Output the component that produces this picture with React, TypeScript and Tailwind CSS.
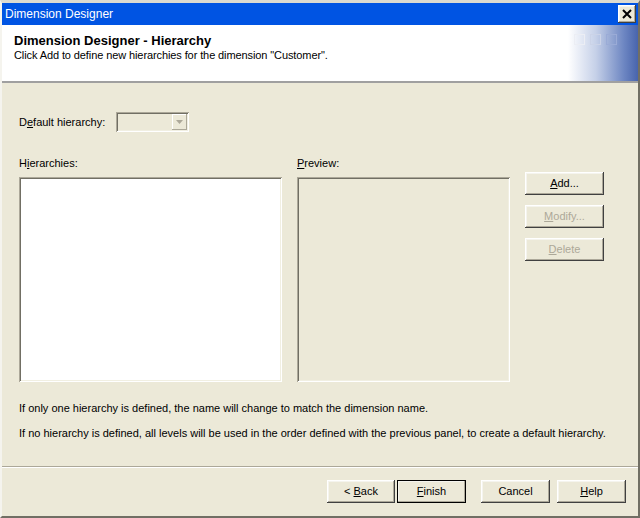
const raised =
  'shadow-[inset_-1px_-1px_#404040,inset_1px_1px_#ffffff,inset_-2px_-2px_#aca899,inset_2px_2px_#f5f4ee]';
const sunken =
  'shadow-[inset_1px_1px_#aca899,inset_-1px_-1px_#ffffff,inset_2px_2px_#716f64,inset_-2px_-2px_#f1efe2]';

function Btn({
  children,
  disabled,
  isDefault,
  className = '',
}: {
  children: React.ReactNode;
  disabled?: boolean;
  isDefault?: boolean;
  className?: string;
}) {
  return (
    <button
      type="button"
      className={`flex h-[23px] items-center justify-center bg-[#ece9d8] text-[11px] ${raised} ${
        isDefault ? 'outline outline-1 outline-[#000000] -outline-offset-1' : ''
      } ${disabled ? 'text-[#aca899]' : 'text-black'} ${className}`}
    >
      {children}
    </button>
  );
}

export default function App() {
  return (
    <div
      className="flex h-[518px] w-[640px] flex-col overflow-hidden border-x-2 border-b-2 border-t-[3px] border-b-[#716f64] border-l-[#f5f4ee] border-r-[#716f64] border-t-[#dcdad0] bg-[#ece9d8] text-[11px] text-black"
      style={{ fontFamily: '"Liberation Sans", Arial, sans-serif' }}
    >
      {/* title bar */}
      <div className="flex h-[22px] shrink-0 items-center justify-between bg-[#0054e3] pl-[3px] pr-[2px]">
        <span className="text-[12px] text-white">Dimension Designer</span>
        <div className={`flex h-[18px] w-[18px] items-center justify-center bg-[#ece9d8] ${raised}`}>
          <svg width="10" height="10" viewBox="0 0 10 10">
            <path d="M1 1 L9 9 M9 1 L1 9" stroke="#000" strokeWidth="2" />
          </svg>
        </div>
      </div>

      {/* header */}
      <div className="relative flex h-[58px] shrink-0 flex-col border-b-2 border-b-[#a0a0a0] bg-white pl-[12px] pt-[8px]">
        <div className="text-[13px] font-bold leading-[16px]">Dimension Designer - Hierarchy</div>
        <div className="leading-[13px] tracking-[-0.1px]">
          Click Add to define new hierarchies for the dimension "Customer".
        </div>
        <div className="absolute right-0 top-0 h-full w-[70px] bg-[linear-gradient(to_right,#ffffff,#c5d0e8_40%,#6d86c2_80%,#4864ac)]">
          <div className="absolute left-[6px] top-[9px] flex gap-[5px]">
            <div className="h-[11px] w-[11px] border border-[#eceef4]" />
            <div className="h-[11px] w-[11px] border border-[#cbd3e7]" />
            <div className="h-[11px] w-[11px] border border-[#9aabd6]" />
          </div>
        </div>
      </div>

      {/* body */}
      <div className="flex flex-1 flex-col px-[17px]">
        <div className="mt-[29px] flex items-center">
          <span className="w-[97px]">
            D<span className="underline">e</span>fault hierarchy:
          </span>
          <div className={`flex h-[20px] w-[73px] items-center justify-end bg-[#ece9d8] pr-[2px] ${sunken}`}>
            <div className="flex h-[16px] w-[15px] items-center justify-center bg-[#ece9d8] shadow-[inset_-1px_-1px_#aca899,inset_1px_1px_#ffffff]">
              <svg width="7" height="4" viewBox="0 0 7 4">
                <path d="M0 0 H7 L3.5 4 Z" fill="#aca899" />
              </svg>
            </div>
          </div>
        </div>

        <div className="mt-[25px] flex">
          <div className="flex w-[278px] flex-col">
            <span className="leading-[13px]">
              H<span className="underline">i</span>erarchies:
            </span>
            <div className={`mt-[7px] h-[205px] w-[263px] bg-white ${sunken}`} />
          </div>
          <div className="flex w-[228px] flex-col">
            <span className="leading-[13px]">
              <span className="underline">P</span>review:
            </span>
            <div className={`mt-[7px] h-[205px] w-[213px] bg-[#ece9d8] ${sunken}`} />
          </div>
          <div className="flex flex-col gap-[10px] pt-[15px]">
            <Btn className="w-[79px]">
              <span className="underline">A</span>dd...
            </Btn>
            <Btn className="w-[79px]" disabled>
              <span className="underline">M</span>odify...
            </Btn>
            <Btn className="w-[79px]" disabled>
              <span className="underline">D</span>elete
            </Btn>
          </div>
        </div>

        <p className="mt-[20px] leading-[13px]">
          If only one hierarchy is defined, the name will change to match the dimension name.
        </p>
        <p className="mt-[12px] leading-[13px]">
          If no hierarchy is defined, all levels will be used in the order defined with the previous
          panel, to create a default hierarchy.
        </p>
      </div>

      {/* footer */}
      <div className="flex h-[50px] shrink-0 items-start justify-end border-t border-t-[#aca899] pr-[12px] pt-[13px] shadow-[inset_0_1px_#ffffff]">
        <Btn className="w-[68px]">
          {'<\u00a0'}
          <span className="underline">B</span>ack
        </Btn>
        <Btn className="ml-[2px] w-[69px]" isDefault>
          <span className="underline">F</span>inish
        </Btn>
        <Btn className="ml-[15px] w-[69px]">Cancel</Btn>
        <Btn className="ml-[7px] w-[69px]">
          <span className="underline">H</span>elp
        </Btn>
      </div>
    </div>
  );
}
